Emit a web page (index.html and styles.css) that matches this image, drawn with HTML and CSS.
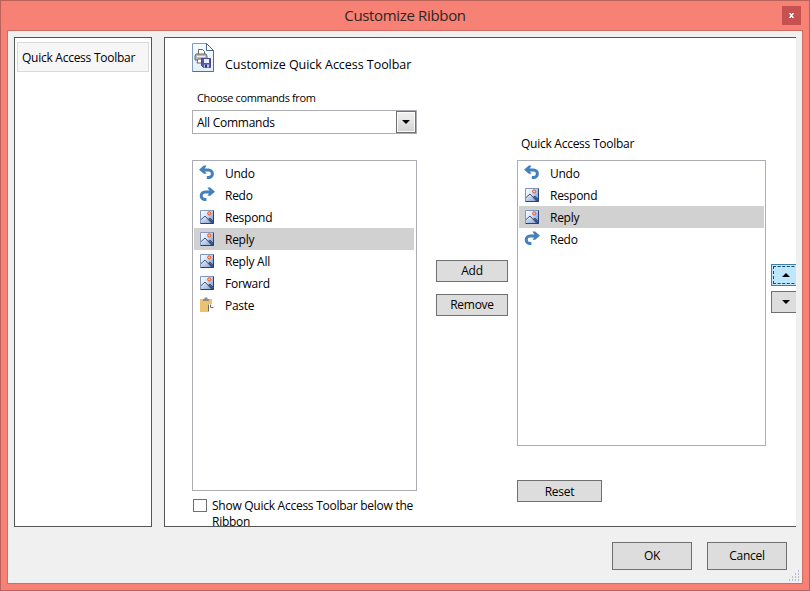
FILE: index.html
```html
<!DOCTYPE html>
<html lang="en">
<head>
<meta charset="utf-8">
<title>Customize Ribbon</title>
<link rel="stylesheet" href="styles.css">
</head>
<body>
<svg class="defs" width="0" height="0">
  <defs>
    <linearGradient id="sky" x1="0" y1="0" x2="1" y2="0.6"><stop offset="0" stop-color="#ffffff"/><stop offset=".5" stop-color="#dce6f6"/><stop offset="1" stop-color="#7f9fd8"/></linearGradient>
    <linearGradient id="hill" x1="0" y1="0" x2="1" y2="1"><stop offset="0" stop-color="#f4f7fc"/><stop offset="1" stop-color="#7c9dd4"/></linearGradient>
    <linearGradient id="sheet" x1="0" y1="0" x2="0" y2="1"><stop offset="0" stop-color="#f4fbfe"/><stop offset="1" stop-color="#e4f0f8"/></linearGradient>
    <symbol id="undo" viewBox="0 0 16 16"><path d="M4.500 4.900H9.600a3.800 3.800 0 0 1 0 7.600H7.800" fill="none" stroke="#4480bb" stroke-width="3"/><path d="M0 4.800 4.800 .5h2.700L5 4.800l2.500 4H4.800z" fill="#4480bb"/></symbol>
    <symbol id="redo" viewBox="0 0 16 16"><path d="M11.500 4.900H6a3.800 3.800 0 0 0 0 7.600H7.400" fill="none" stroke="#4480bb" stroke-width="3"/><path d="M16 4.800 11.200 .5H8.500L11 4.800l-2.500 4h2.700z" fill="#4480bb"/></symbol>
    <symbol id="picture" viewBox="0 0 16 16"><path d="M1 1h14v14H1z" fill="url(#sky)"/><path d="M1.500 11 6 7l3.500 4 1.500-1.500 3.500 3.500v1.500h-13z" fill="url(#hill)"/><path d="M2 10.600 6 7l6.500 7M9 10.500l2-1.400 3.500 3.400" fill="none" stroke="#33476c" stroke-width=".9"/><path d="m9.800 10.700 1.200-1 3.500 3.500v1.300h-1.500z" fill="#324b7e"/><circle cx="10.200" cy="4.400" r="1.600" fill="#ffc19a" stroke="#e3572a"/><path d="M1.500 14.500v-13h13" fill="none" stroke="#8097c2"/><path d="M1.500 14.500h13v-13" fill="none" stroke="#25427e"/></symbol>
    <symbol id="paste" viewBox="0 0 16 16"><path d="M1 2h12v5H9v8H1z" fill="#ebc36e"/><path d="M4 4V2h1.500V.5h3V2H10v2z" fill="#8c8c8c"/><path d="M9 7h3l3 3v5H9z" fill="#fff"/><path d="M9.500 14.500v-7M11.500 7.500v3h3" fill="none" stroke="#73665c"/></symbol>
  </defs>
</svg>
<div class="window">
  <header class="titlebar">
    <h1>Customize Ribbon</h1>
    <button class="close" aria-label="Close"><svg width="5" height="5" viewBox="0 0 5 5"><path d="M.5 0 4.500 5M4.500 0 .5 5" stroke="#fff" stroke-width="1.500"/></svg></button>
  </header>
  <div class="client">
    <div class="panes">
      <nav class="nav"><div class="nav-item">Quick Access Toolbar</div></nav>
      <main class="page">
        <section class="commands">
          <div class="heading">
            <svg width="23" height="30" viewBox="0 0 23 30"><path d="M.5 .5h14l7 7v21H.5z" fill="url(#sheet)" stroke="#7f9cba"/><path d="M21.500 7.500v21H.5" fill="none" stroke="#4f7196"/><path d="M14.500 .5v7h7z" fill="#fff" stroke="#426789"/><path d="M6.500 12V6.500h4l2 2V12" fill="#fff" stroke="#666"/><path d="M4 11h10l1 2v4H3v-4z" fill="#bbb" stroke="#666"/><path d="M5 13.500h8" stroke="#eee"/><path d="M6 16h4v4H5z" fill="#fff" stroke="#666"/><path d="M9.500 15.500h9v9h-7l-2-2z" fill="#5557af" stroke="#45459a"/><path d="M12 16h5v4h-5z" fill="#e8eefb"/><path d="M12 21.500h5v3h-5z" fill="#c4c6df"/><path d="M13 21.500h2v3h-2z" fill="#2b2d75"/></svg>
            <h2>Customize Quick Access Toolbar</h2>
          </div>
          <div class="label">Choose commands from</div>
          <div class="combo"><span>All Commands</span><span class="drop"><svg width="8" height="4" viewBox="0 0 8 4"><path d="M0 0h8L4 4z"/></svg></span></div>
          <ul class="list source">
            <li><svg><use href="#undo"/></svg><span>Undo</span></li>
            <li><svg><use href="#redo"/></svg><span>Redo</span></li>
            <li><svg><use href="#picture"/></svg><span>Respond</span></li>
            <li class="selected"><svg><use href="#picture"/></svg><span>Reply</span></li>
            <li><svg><use href="#picture"/></svg><span>Reply All</span></li>
            <li><svg><use href="#picture"/></svg><span>Forward</span></li>
            <li><svg><use href="#paste"/></svg><span>Paste</span></li>
          </ul>
          <div class="check"><span class="box"></span><span class="check-text">Show Quick Access Toolbar below the Ribbon</span></div>
        </section>
        <div class="transfer"><button>Add</button><button>Remove</button></div>
        <section class="toolbar">
          <div class="toolbar-label">Quick Access Toolbar</div>
          <ul class="list target">
            <li><svg><use href="#undo"/></svg><span>Undo</span></li>
            <li><svg><use href="#picture"/></svg><span>Respond</span></li>
            <li class="selected"><svg><use href="#picture"/></svg><span>Reply</span></li>
            <li><svg><use href="#redo"/></svg><span>Redo</span></li>
          </ul>
          <button class="reset">Reset</button>
        </section>
        <div class="order">
          <button class="focused" aria-label="Move up"><svg width="8" height="4" viewBox="0 0 8 4"><path d="M0 4h8L4 0z"/></svg></button>
          <button aria-label="Move down"><svg width="8" height="4" viewBox="0 0 8 4"><path d="M0 0h8L4 4z"/></svg></button>
        </div>
      </main>
    </div>
    <footer class="actions"><button>OK</button><button>Cancel</button></footer>
    <svg class="grip" width="11" height="11" viewBox="0 0 11 11"><path d="M9 0h1v2H9zM9 3h1v2H9zM6 3h1v2H6zM9 6h1v2H9zM6 6h1v2H6zM3 6h1v2H3zM9 9h1v2H9zM6 9h1v2H6zM3 9h1v2H3zM0 9h1v2H0z" fill="#b4bcd6"/></svg>
  </div>
</div>
</body>
</html>
```
FILE: styles.css
```css
* { box-sizing: border-box; }
body { margin: 0; color: #000; font: 12px/16px "Open Sans", "Noto Sans", sans-serif; letter-spacing: -0.26px; }
h1, h2, ul { margin: 0; padding: 0; font-weight: 400; list-style: none; }
button { display: flex; align-items: center; justify-content: center; padding: 0; border: 1px solid #707070; border-radius: 0; background: #ddd; color: #000; font: inherit; letter-spacing: inherit; }
.defs { position: absolute; }
.window { width: 810px; height: 591px; padding: 0 6px 6px; border: 1px solid #b8625a; background: #f68174; }
.titlebar { display: flex; height: 29px; position: relative; justify-content: center; }
.titlebar h1 { font-size: 15px; line-height: 29px; letter-spacing: -0.34px; color: #2e2625; }
.close { position: absolute; right: 2px; top: 5px; width: 19px; height: 19px; border: 0; background: #c75050; }
.client { position: relative; height: 554px; padding: 6px 6px 0; border: 1px solid #cd6d64; background: #f0f0f0; }
.panes { display: flex; gap: 12px; height: 490px; }
.nav { width: 138px; padding: 4px 2px; border: 1px solid #555; background: #fff; }
.nav-item { height: 30px; padding: 7px 4px; border: 1px solid #dadada; background: #f6f6f6; }
.page { display: flex; flex: 1; min-width: 0; padding-left: 27px; overflow: hidden; border: 1px solid #555; border-right: 0; background: #fff; }
.commands { width: 225px; flex: none; padding-top: 5px; }
.heading { display: flex; gap: 10px; height: 30px; }
.heading h2 { font-size: 12.5px; line-height: 16px; letter-spacing: -0.04px; padding-top: 14px; white-space: nowrap; }
.label { margin-top: 17px; padding-left: 5px; font-size: 11px; line-height: 16px; letter-spacing: -0.38px; }
.combo { display: flex; justify-content: space-between; height: 24px; margin-top: 4px; padding-left: 4px; border: 1px solid #abadb3; line-height: 24px; }
.drop { display: flex; width: 20px; align-items: center; justify-content: center; border: 1px solid #707070; background: linear-gradient(#f2f2f2, #d2d2d2); box-shadow: inset 0 0 0 1px #fafafa; }
.list { padding: 1px; border: 1px solid #abadb3; background: #fff; }
.source { height: 331px; margin-top: 26px; padding-right: 2px; }
.target { height: 286px; margin-top: 8px; }
.list li { display: flex; align-items: center; gap: 10px; height: 22px; padding-left: 5px; }
.list li svg { width: 16px; height: 16px; flex: none; }
.list li span { padding-top: 2px; }
.list li.selected { background: #d1d1d1; }
.check { display: flex; gap: 5px; margin: 7px 0 0 1px; }
.box { flex: none; width: 14px; height: 13px; margin-top: 1px; border: 1px solid #707070; }
.check-text { width: 204px; }
.transfer { display: flex; flex-direction: column; flex: none; width: 72px; gap: 12px; margin: 222px 9px 0 19px; }
.transfer button { height: 22px; }
.toolbar { width: 249px; flex: none; padding-top: 98px; }
.toolbar-label { padding-left: 4px; }
.reset { width: 85px; height: 22px; margin-top: 34px; padding-top: 2px; }
.order { display: flex; flex-direction: column; flex: none; gap: 5px; margin: 226px 0 0 5px; }
.order button { width: 30px; height: 22px; }
.order .focused { border-color: #3c7fb1; background: #bee6fd; outline: 1px dashed #26495f; outline-offset: -3px; }
.actions { display: flex; justify-content: flex-end; gap: 15px; padding: 15px 9px 0 0; }
.actions button { width: 80px; height: 28px; }
.grip { position: absolute; right: 2px; bottom: 2px; }
```
